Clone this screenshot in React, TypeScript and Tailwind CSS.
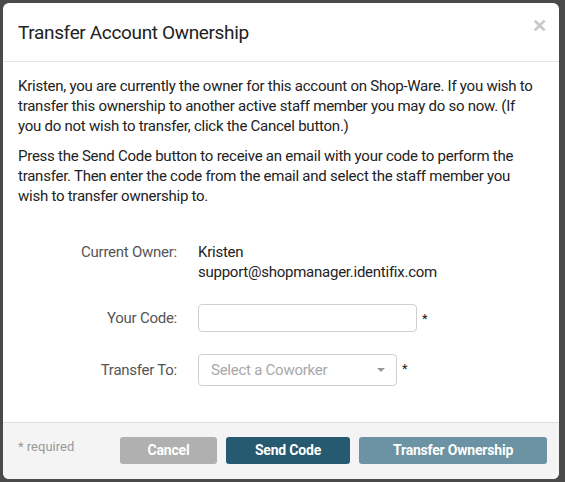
export default function App() {
  return (
    <div className="w-[565px] h-[482px] bg-[#4a4a4a] pl-[3px] pt-[3px] font-['Roboto',sans-serif]">
      <div className="w-[556px] h-[476px] bg-white rounded-[6px] overflow-hidden flex flex-col">
        {/* Header */}
        <div className="h-[59px] shrink-0 border-b border-[#e5e5e5] flex items-center justify-between pl-[15px] pr-[12px]">
          <h1 className="text-[19px] text-[#222] leading-none tracking-[-0.35px]">Transfer Account Ownership</h1>
          <span className="text-[#c8c8c8] text-[18px] font-bold leading-none -mt-[12px]">✕</span>
        </div>

        {/* Body */}
        <div className="flex-1 pl-[15px] pr-[8px] pt-[14px] text-[15px] leading-[20px] text-[#222] tracking-[-0.25px]">
          <p className="whitespace-nowrap">
            Kristen, you are currently the owner for this account on Shop-Ware. If you wish to
            <br />
            transfer this ownership to another active staff member you may do so now. (If
            <br />
            you do not wish to transfer, click the Cancel button.)
          </p>
          <p className="mt-[10px] whitespace-nowrap">
            Press the Send Code button to receive an email with your code to perform the
            <br />
            transfer. Then enter the code from the email and select the staff member you
            <br />
            wish to transfer ownership to.
          </p>

          <div className="mt-[36px] grid grid-cols-[159px_1fr] gap-x-[21px] items-center">
            <div className="text-right text-[#555] self-start">Current Owner:</div>
            <div>
              <div>Kristen</div>
              <div>support@shopmanager.identifix.com</div>
            </div>

            <div className="text-right text-[#555] mt-[22px]">Your Code:</div>
            <div className="flex items-start mt-[22px]">
              <input
                type="text"
                className="w-[219px] h-[28px] border border-[#cfcfcf] rounded-[4px] bg-white outline-none"
              />
              <span className="ml-[5px] text-[13px] leading-none mt-[8px]">*</span>
            </div>

            <div className="text-right text-[#555] mt-[22px]">Transfer To:</div>
            <div className="flex items-start mt-[22px]">
              <div className="w-[199px] h-[32px] border border-[#cfcfcf] rounded-[4px] flex items-center justify-between pl-[12px] pr-[11px]">
                <span className="text-[#a8a8a8]">Select a Coworker</span>
                <span className="w-0 h-0 border-l-[4px] border-r-[4px] border-t-[4px] border-l-transparent border-r-transparent border-t-[#999]"></span>
              </div>
              <span className="ml-[5px] text-[13px] leading-none mt-[8px]">*</span>
            </div>
          </div>
        </div>

        {/* Footer */}
        <div className="h-[57px] shrink-0 border-t border-[#e0e0e0] bg-[#f4f4f4] flex items-center pl-[15px] pr-[12px] pb-[2px]">
          <span className="text-[13px] text-[#999] -mt-[6px]">* required</span>
          <div className="ml-auto flex gap-[9px]">
            <button className="w-[97px] h-[27px] rounded-[3px] bg-[#b0b0b0] text-white font-bold text-[14px] tracking-[-0.2px]">
              Cancel
            </button>
            <button className="w-[124px] h-[27px] rounded-[3px] bg-[#265a70] text-white font-bold text-[14px] tracking-[-0.2px]">
              Send Code
            </button>
            <button className="w-[188px] h-[27px] rounded-[3px] bg-[#6b93a3] text-white font-bold text-[14px] tracking-[-0.2px]">
              Transfer Ownership
            </button>
          </div>
        </div>
      </div>
    </div>
  );
}
